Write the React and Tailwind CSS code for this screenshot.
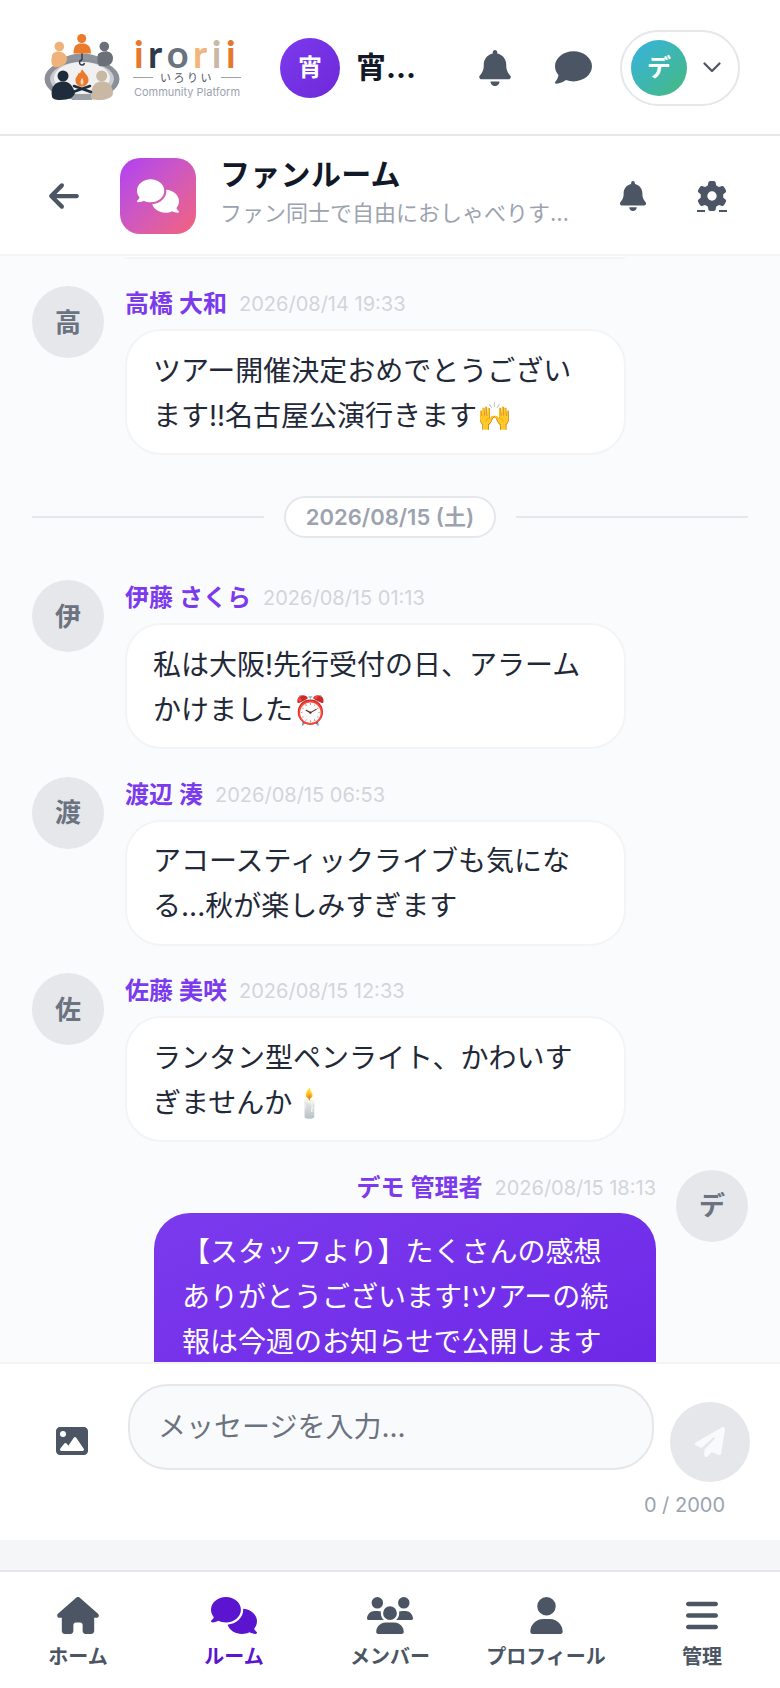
import React from "react";
import { FaBell, FaComment, FaComments, FaUsers, FaUser, FaHouse, FaBars, FaImage, FaPaperPlane, FaArrowLeft, FaGear } from "react-icons/fa6";

const font = { fontFamily: '"Inter", "Noto Sans CJK JP", "Noto Sans", sans-serif' };

function LogoMark() {
  return (
    <svg width="76" height="67" viewBox="0 0 76 67" className="shrink-0">
      <ellipse cx="38" cy="45" rx="37.5" ry="21" fill="#8b8f98" />
      <ellipse cx="38" cy="45" rx="32" ry="17" fill="#c9ccd1" />
      <ellipse cx="38" cy="44" rx="28" ry="16" fill="#f1f1f2" />
      <path d="M18 27 Q38 17 58 27" stroke="#8f939b" strokeWidth="5" fill="none" />
      <path d="M28 60 H48 V66 H28 Z" fill="#9ca0a8" />
      <path d="M38 14 V26" stroke="#2f3a4a" strokeWidth="1.4" />
      <path d="M38 26 a2.500 2.500 0 1 0 2.500 3" stroke="#2f3a4a" strokeWidth="1.4" fill="none" />
      <circle cx="37.700" cy="4.500" r="4.500" fill="#ec7a2c" />
      <path d="M29.500 19.500 C29.500 11 33 9.500 37.700 9.500 C42.500 9.500 47 11 47 19.500 Z" fill="#ec7a2c" />
      <circle cx="15.300" cy="12.500" r="4.800" fill="#f0b27a" />
      <path d="M8 22 C8 16 22 15 23 25 C23 31 15 34 10 33 C7 31 7 26 8 22 Z" fill="#f0b27a" />
      <circle cx="60.300" cy="12.500" r="4.800" fill="#6b7078" />
      <path d="M54 20 C60 15 69 17 69 24 C69 32 61 33 55 32 C53 28 53 23 54 20 Z" fill="#6b7078" />
      <circle cx="19" cy="42" r="5.500" fill="#1f2c3c" />
      <path d="M8 63 C6 52 12 47.500 19 47.500 C27 47.500 29 54 31 58 C31 63 25 66 16 66 C11 66 9 65 8 63 Z" fill="#1f2c3c" />
      <circle cx="57.700" cy="42" r="5.500" fill="#c9b8a4" />
      <path d="M47 64 C46 53 51 47.500 58 47.500 C66 47.500 69 53 69 60 C68 64 61 66 55 66 C50 66 48 65 47 64 Z" fill="#c9b8a4" />
      <path d="M38 35 C41 40 45 42 44.500 47 C43.500 51 40 52.500 38 52.500 C35 52.500 32 51 31.500 47 C31 43 34 42 34.500 39 C36 40 37 38 38 35 Z" fill="#ec7a2c" />
      <path d="M38 44 C40 47 40 50 38 51 C36 50 36 47 38 44 Z" fill="#f8d9bd" />
      <path d="M29 58 L46 52 M47 58 L30 52" stroke="#1f2c3c" strokeWidth="2.600" strokeLinecap="round" />
    </svg>
  );
}

function Logo() {
  return (
    <div className="flex items-center gap-[13px] w-[198px] shrink-0">
      <LogoMark />
      <div className="flex flex-col items-center w-[108px] shrink-0">
        <div className="flex h-[34px] items-center text-[38px] leading-[34px] font-bold tracking-[4.500px] whitespace-nowrap" style={{ fontFamily: "Lato, sans-serif" }}>
          <span className="text-[#e8772e]">i</span>
          <span className="text-[#2f3a4a]">r</span>
          <span className="text-[#6b7280]">o</span>
          <span className="text-[#f2b57c]">r</span>
          <span className="text-[#c9b8a4]">i</span>
          <span className="text-[#e8772e]">i</span>
        </div>
        <div className="flex items-center gap-[7px] h-[14px] mt-[1px] w-full">
          <div className="h-px flex-1 bg-[#9ca3af]" />
          <span className="text-[11px] leading-[14px] tracking-[2.500px] text-[#4b5563] whitespace-nowrap">いろりい</span>
          <div className="h-px flex-1 bg-[#9ca3af]" />
        </div>
        <div className="text-[11px] leading-[15px] text-[#9ca3af] whitespace-nowrap" style={{ fontFamily: "Inter, sans-serif" }}>Community Platform</div>
      </div>
    </div>
  );
}

function TopHeader() {
  return (
    <header className="h-[136px] shrink-0 bg-white border-b-2 border-[#e5e7eb] flex items-center pl-[44px] pr-[40px] pt-[1px]">
      <Logo />
      <div className="ml-[38px] w-[60px] h-[60px] rounded-full bg-gradient-to-br from-[#7c3aed] to-[#6d28d9] text-white flex items-center justify-center text-[24px] font-bold shrink-0">宵</div>
      <div className="ml-[16px] w-[60px] text-[30px] font-bold text-[#111827] whitespace-nowrap overflow-hidden">宵...</div>
      <FaBell className="ml-[64px] w-[32px] h-[36px] text-[#4b5563] shrink-0" />
      <FaComment className="ml-[44px] w-[37px] h-[37px] text-[#4b5563] shrink-0" />
      <div className="ml-[28px] w-[120px] h-[76px] rounded-full border-2 border-[#e5e7eb] bg-white flex items-center pl-[9px] shrink-0">
        <div className="w-[56px] h-[56px] rounded-full bg-gradient-to-br from-[#38b2e0] to-[#48b87c] text-white flex items-center justify-center text-[24px] font-bold">デ</div>
        <svg width="18" height="11" viewBox="0 0 18 11" className="ml-[16px] shrink-0" fill="none" stroke="#4b5563" strokeWidth="2.200" strokeLinecap="round" strokeLinejoin="round">
          <path d="M1.500 1.500 L9 9 L16.500 1.500" />
        </svg>
      </div>
    </header>
  );
}

function RoomHeader() {
  return (
    <div className="h-[120px] shrink-0 bg-white border-b-2 border-[#f3f4f6] flex items-center pl-[48px] pr-[53px] pt-[1px]">
      <FaArrowLeft className="w-[32px] h-[34px] text-[#4b5563] shrink-0" />
      <div className="ml-[40px] w-[76px] h-[76px] rounded-[20px] bg-gradient-to-br from-[#b13bf5] to-[#f4607a] flex items-center justify-center text-white shrink-0">
        <FaComments className="w-[42px] h-[36px]" />
      </div>
      <div className="ml-[24px] flex-1 min-w-0 flex flex-col mt-[-5px]">
        <div className="text-[30px] leading-[40px] font-bold text-[#111827] tracking-[0.3px]">ファンルーム</div>
        <div className="text-[22px] leading-[38px] text-[#9ca3af] w-[350px] whitespace-nowrap overflow-hidden text-ellipsis">ファン同士で自由におしゃべりすることができます</div>
      </div>
      <FaBell className="w-[28px] h-[30px] text-[#4b5563] shrink-0" />
      <div className="relative ml-[50px] w-[30px] h-[30px] shrink-0 text-[#4b5563]">
        <FaGear className="w-[30px] h-[30px]" />
        <div className="absolute left-0 bottom-[-1px] w-[8px] h-[1.500px] bg-[#4b5563]" />
        <div className="absolute right-0 bottom-[-1px] w-[8px] h-[1.500px] bg-[#4b5563]" />
      </div>
    </div>
  );
}

function Message({ initial, name, time, lines }) {
  return (
    <div className="flex gap-[21px] items-start">
      <div className="w-[72px] h-[72px] rounded-full bg-[#e5e7eb] text-[#6b7280] flex items-center justify-center text-[26px] font-semibold shrink-0">{initial}</div>
      <div className="w-[501px]">
        <div className="h-[32px] mt-[2px] mb-[9px] flex items-center gap-[12px] whitespace-nowrap">
          <span className="text-[24px] font-semibold text-[#7c3aed]">{name}</span>
          <span className="text-[20px] text-[#d1d5db]">{time}</span>
        </div>
        <div className="bg-white border-2 border-[#f3f4f6] rounded-[36px] px-[26px] pt-[17.500px] pb-[14.500px] text-[28px] leading-[45px] text-[#1f2937]">
          {lines}
        </div>
      </div>
    </div>
  );
}

function DateDivider() {
  return (
    <div className="flex items-center gap-[20px] mt-[13.500px] mb-[14.500px]">
      <div className="h-[2px] flex-1 bg-[#e5e7eb]" />
      <div className="h-[42px] w-[212px] rounded-full border-2 border-[#e5e7eb] bg-white text-[22px] font-semibold text-[#9ca3af] flex items-center justify-center">2026/08/15 (土)</div>
      <div className="h-[2px] flex-1 bg-[#e5e7eb]" />
    </div>
  );
}

function OwnMessage() {
  return (
    <div className="flex justify-end gap-[20px] items-start">
      <div className="w-[502px] flex flex-col items-end">
        <div className="h-[32px] mt-[2px] mb-[9px] flex items-center gap-[12px] whitespace-nowrap">
          <span className="text-[24px] font-semibold text-[#7c3aed]">デモ 管理者</span>
          <span className="text-[20px] text-[#d1d5db]">2026/08/15 18:13</span>
        </div>
        <div className="w-full bg-gradient-to-br from-[#7c3aed] to-[#6b24e6] rounded-[36px] px-[28px] pt-[17.500px] pb-[14.500px] text-[28px] leading-[45px] text-white">
          【スタッフより】たくさんの感想<br />ありがとうございます!ツアーの続<br />報は今週のお知らせで公開します<br />。お楽しみに!
        </div>
      </div>
      <div className="w-[72px] h-[72px] rounded-full bg-[#e5e7eb] text-[#6b7280] flex items-center justify-center text-[26px] font-semibold shrink-0">デ</div>
    </div>
  );
}

function MessageList() {
  return (
    <div className="flex-1 min-h-0 overflow-hidden bg-[#fafbfd] px-[32px]">
      <div className="h-[3px] ml-[93px] w-[501px] bg-white border-b-2 border-[#f3f4f6] rounded-b-[36px] mb-[27px]" />
      <div className="flex flex-col gap-[27.500px]">
        <Message initial="高" name="高橋 大和" time="2026/08/14 19:33" lines={<>ツアー開催決定おめでとうござい<br />ます!!名古屋公演行きます🙌</>} />
        <DateDivider />
        <Message initial="伊" name="伊藤 さくら" time="2026/08/15 01:13" lines={<>私は大阪!先行受付の日、アラーム<br />かけました⏰</>} />
        <Message initial="渡" name="渡辺 湊" time="2026/08/15 06:53" lines={<>アコースティックライブも気にな<br />る...秋が楽しみすぎます</>} />
        <Message initial="佐" name="佐藤 美咲" time="2026/08/15 12:33" lines={<>ランタン型ペンライト、かわいす<br />ぎませんか🕯️</>} />
        <OwnMessage />
      </div>
    </div>
  );
}

function Composer() {
  return (
    <div className="h-[178px] shrink-0 bg-white border-t-2 border-[#f3f4f6] pt-[20px] px-[30px] flex flex-col">
      <div className="flex items-start">
        <FaImage className="ml-[26px] mt-[41px] w-[32px] h-[32px] text-[#4b5563] shrink-0" />
        <div className="ml-[40px] w-[526px] h-[86px] rounded-[40px] border-2 border-[#e5e7eb] bg-[#f9fafb] flex items-center pl-[28px] text-[28px] text-[#6b7280]">メッセージを入力...</div>
        <div className="ml-[16px] mt-[18px] w-[80px] h-[80px] rounded-full bg-[#e5e7eb] flex items-center justify-center text-white shrink-0">
          <FaPaperPlane className="w-[30px] h-[30px] opacity-80" />
        </div>
      </div>
      <div className="mt-[10px] pr-[25px] text-right text-[20px] leading-[26px] text-[#9ca3af] whitespace-nowrap">0 / 2000</div>
    </div>
  );
}

const navItems = [
  { Icon: FaHouse, label: "ホーム", w: "w-[42px]", h: "h-[37px]" },
  { Icon: FaComments, label: "ルーム", active: true, w: "w-[46px]", h: "h-[37px]" },
  { Icon: FaUsers, label: "メンバー", w: "w-[46px]", h: "h-[37px]" },
  { Icon: FaUser, label: "プロフィール", w: "w-[33px]", h: "h-[37px]" },
  { Icon: FaBars, label: "管理", w: "w-[32px]", h: "h-[37px]" },
];

function BottomNav() {
  return (
    <nav className="h-[118px] shrink-0 bg-white border-t-2 border-[#e5e7eb] grid grid-cols-5 pt-[25px]">
      {navItems.map(({ Icon, label, active, w, h }) => (
        <div key={label} className={active ? "flex flex-col items-center text-[#5b14cf]" : "flex flex-col items-center text-[#4b5563]"}>
          <Icon className={`${w} ${h}`} />
          <div className="mt-[8px] text-[20px] leading-[30px] font-semibold whitespace-nowrap">{label}</div>
        </div>
      ))}
    </nav>
  );
}

export default function App() {
  return (
    <div className="w-[780px] h-[1688px] flex flex-col bg-[#f3f4f6] overflow-hidden" style={font}>
      <TopHeader />
      <RoomHeader />
      <MessageList />
      <Composer />
      <div className="h-[30px] shrink-0 bg-[#f5f6f8]" />
      <BottomNav />
    </div>
  );
}
